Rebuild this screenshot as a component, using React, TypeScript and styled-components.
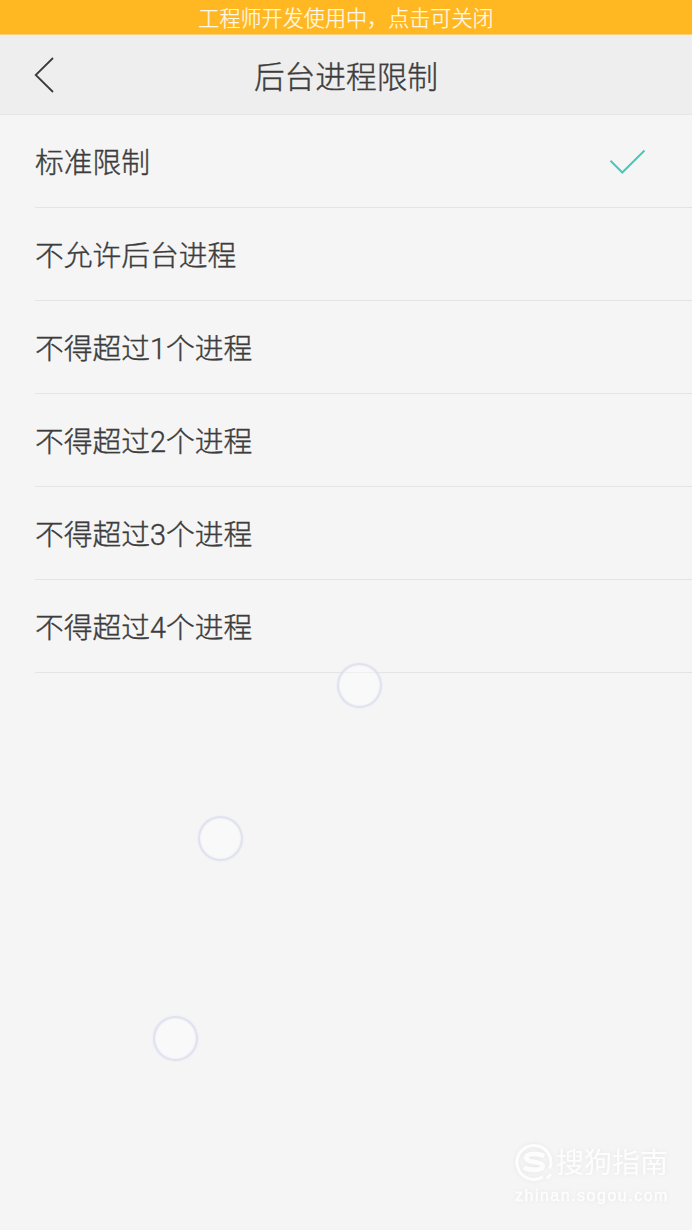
import React from "react";
import styled, { createGlobalStyle } from "styled-components";

const GlobalStyle = createGlobalStyle`
  * { box-sizing: border-box; }
  body {
    margin: 0;
    background: #f5f5f5;
    color: #3c3c3c;
    font-family: "Noto Sans CJK SC", sans-serif;
    font-weight: 300;
  }
`;

const Screen = styled.div`
  position: relative;
  width: 692px;
  height: 1230px;
  overflow: hidden;
  background: #f5f5f5;
`;

const Banner = styled.div`
  height: 35px;
  display: flex;
  justify-content: center;
  background: #ffb821;
  border-bottom: 1px solid #f9cf7c;
  color: #fff9ea;
  font-size: 21.1px;
  line-height: 34px;
  white-space: nowrap;
  -webkit-text-stroke: 0.25px #fff9ea;
`;

const Header = styled.header`
  height: 80px;
  display: grid;
  grid-template-columns: 88px 1fr 88px;
  align-items: center;
  background: #eeeeee;
  border-bottom: 1px solid #e6e6e6;
`;

const BackButton = styled.button`
  display: flex;
  padding: 1px 0 0 32px;
  border: 0;
  background: none;
`;

const Title = styled.h1`
  margin: 0;
  text-align: center;
  font-size: 30.7px;
  font-weight: 300;
  line-height: 79px;
  -webkit-text-stroke: 0.4px #3c3c3c;
`;

const List = styled.ul`
  margin: 0;
  padding: 0 0 0 35px;
  list-style: none;
`;

const Row = styled.li`
  height: 93px;
  display: flex;
  align-items: center;
  justify-content: space-between;
  padding: 0 46px 0 0;
  border-bottom: 1px solid #e4e4e4;
  font-family: Roboto, "Noto Sans CJK SC", sans-serif;
  font-size: 28.75px;
  line-height: 88px;
  -webkit-text-stroke: 0.4px #3c3c3c;
`;

const Label = styled.span`
  padding-top: 4px;
`;

const TouchPoint = styled.span<{ $x: number; $y: number }>`
  position: absolute;
  left: ${(p) => p.$x - 22.5}px;
  top: ${(p) => p.$y - 22.5}px;
  width: 45px;
  height: 45px;
  border-radius: 50%;
  border: 2px solid rgba(215, 217, 236, 0.75);
  background: rgba(255, 255, 255, 0.4);
  box-shadow: 0 0 2px #e4e5f1, inset 0 0 2px #e4e5f1;
`;

const Watermark = styled.div`
  position: absolute;
  left: 515px;
  top: 1143px;
  width: 160px;
  color: #fdfdfd;
  filter: drop-shadow(0 0 2px rgba(0, 0, 0, 0.06));
`;

const Brand = styled.div`
  display: flex;
  align-items: center;
  gap: 2px;
  height: 39px;
  font-size: 28px;
  font-weight: 400;
  line-height: 37px;
  white-space: nowrap;
`;

const BrandName = styled.span`
  padding-bottom: 2px;
`;

const Site = styled.div`
  font-family: "Liberation Sans", sans-serif;
  font-size: 16px;
  font-weight: 400;
  line-height: 20px;
  letter-spacing: 1.5px;
  margin-top: 4px;
  -webkit-text-stroke: 0.4px #fdfdfd;
`;

const options = [
  "标准限制",
  "不允许后台进程",
  "不得超过1个进程",
  "不得超过2个进程",
  "不得超过3个进程",
  "不得超过4个进程",
];

const touches = [
  { x: 359.5, y: 685.5 },
  { x: 220.5, y: 838.5 },
  { x: 175, y: 1038.5 },
];

const BackIcon = () => (
  <svg width="24" height="38" viewBox="0 0 24 38" fill="none" stroke="#3a3a3a" strokeWidth="1.8">
    <path d="M21 2 3.7 19 21 36" />
  </svg>
);

const CheckIcon = () => (
  <svg width="37" height="26" viewBox="0 0 37 26" fill="none" stroke="#45cabc" strokeWidth="2">
    <path d="M1.5 12.7 13.3 24.5 35.5 2.5" />
  </svg>
);

const SogouIcon = () => (
  <svg width="39" height="39" viewBox="0 0 39 39" fill="none" stroke="#fdfdfd">
    <path d="M28 33.8A17 17 0 1 1 34.8 25.5" strokeWidth="3" />
    <path d="M31.8 35.5 36 31.3" strokeWidth="3" />
    <path
      d="M29 13.2C25 10.6 11.2 9.2 11.2 14.8c0 5.4 16.5 3 16.5 8.3 0 5-13.7 4.6-18.7 1.3"
      strokeWidth="4.6"
    />
  </svg>
);

export default function App() {
  return (
    <>
      <GlobalStyle />
      <Screen>
        <Banner>工程师开发使用中，点击可关闭</Banner>
        <Header>
          <BackButton aria-label="返回">
            <BackIcon />
          </BackButton>
          <Title>后台进程限制</Title>
        </Header>
        <List>
          {options.map((label, i) => (
            <Row key={label}>
              <Label>{label}</Label>
              {i === 0 && <CheckIcon />}
            </Row>
          ))}
        </List>
        {touches.map((t) => (
          <TouchPoint key={t.y} $x={t.x} $y={t.y} />
        ))}
        <Watermark>
          <Brand>
            <SogouIcon />
            <BrandName>搜狗指南</BrandName>
          </Brand>
          <Site>zhinan.sogou.com</Site>
        </Watermark>
      </Screen>
    </>
  );
}
